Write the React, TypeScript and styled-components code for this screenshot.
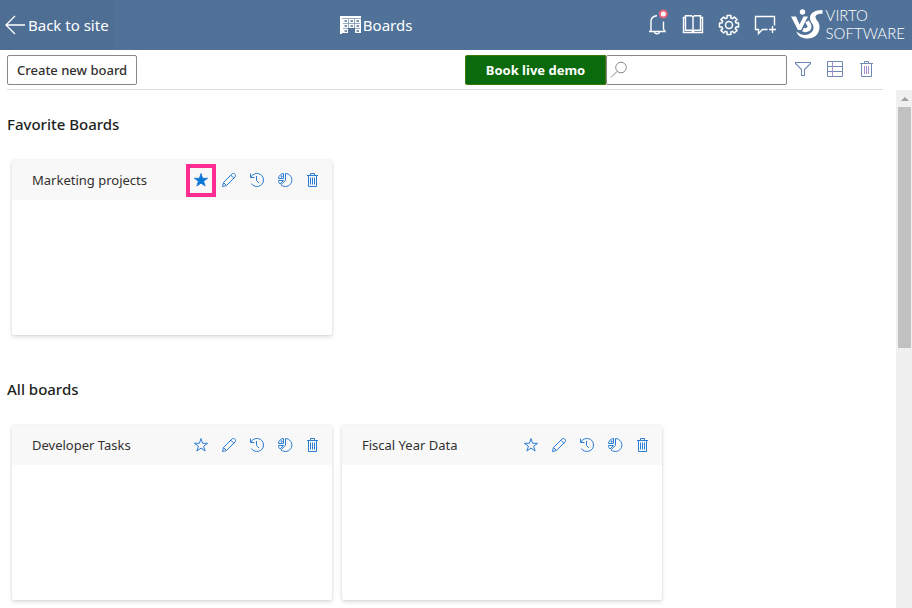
import React from 'react';
import styled, { createGlobalStyle } from 'styled-components';

const GlobalStyle = createGlobalStyle`
  * { box-sizing: border-box; }
  body {
    margin: 0;
    background: #fff;
    color: #323130;
    font-family: "Noto Sans", "Open Sans", sans-serif;
    font-size: 13px;
  }
  button, input { font: inherit; color: inherit; }
  button { cursor: pointer; }
  svg { display: block; flex: none; }
`;

const Page = styled.div`
  display: flex;
  flex-direction: column;
  height: 100vh;
`;

const Header = styled.header`
  display: flex;
  justify-content: space-between;
  flex: none;
  height: 50px;
  background: #517298;
  color: #fff;
`;

const BackLink = styled.a`
  display: flex;
  align-items: center;
  gap: 3px;
  padding: 0 5px;
  background: #4e6e94;
  color: #fff;
  font-size: 15px;
  text-decoration: none;
`;

const Title = styled.h1`
  display: flex;
  align-items: center;
  gap: 2px;
  margin: 0;
  font-size: 15px;
  font-weight: 400;
`;

const HeaderTools = styled.div`
  display: flex;
  align-items: center;
  padding-right: 7px;
`;

const HeaderButton = styled.button`
  display: flex;
  align-items: center;
  justify-content: center;
  width: 36px;
  height: 50px;
  padding: 0;
  border: 0;
  background: none;
  color: #fff;
`;

const Logo = styled.a`
  display: flex;
  align-items: center;
  gap: 3px;
  margin-left: 8px;
  padding-bottom: 2px;
  color: #fff;
  font-family: Lato, sans-serif;
  font-size: 15px;
  font-weight: 300;
  line-height: 18px;
  text-decoration: none;
`;

const LogoLine = styled.span`
  display: block;
`;

const Toolbar = styled.div`
  display: flex;
  align-items: center;
  flex: none;
  height: 40px;
  margin: 0 29px 0 7px;
  border-bottom: 1px solid #dcdcdc;
`;

const CreateButton = styled.button`
  height: 30px;
  padding: 0 9px;
  border: 1px solid #8a8886;
  border-radius: 2px;
  background: #fff;
  font-weight: 500;
`;

const DemoButton = styled.button`
  width: 141px;
  height: 30px;
  margin-left: auto;
  padding: 0;
  border: 1px solid #3a7a0a;
  border-radius: 2px 0 0 2px;
  background: #0b6a0b;
  color: #fff;
  font-weight: 700;
`;

const SearchBox = styled.label`
  display: flex;
  align-items: center;
  width: 181px;
  height: 30px;
  padding: 0 3px;
  border: 1px solid #8a8886;
  border-radius: 2px;
  color: #8a8886;
`;

const SearchInput = styled.input`
  flex: 1;
  min-width: 0;
  height: 26px;
  padding: 0 4px;
  border: 0;
  outline: 0;
  background: none;
`;

const ToolButton = styled.button`
  display: flex;
  align-items: center;
  justify-content: center;
  width: 32px;
  height: 30px;
  padding: 0 0 2px;
  border: 0;
  background: none;
  color: #7089b5;
`;

const Scroller = styled.div`
  display: flex;
  flex: 1;
  min-height: 0;
`;

const Main = styled.main`
  display: flex;
  flex-direction: column;
  gap: 42px;
  flex: 1;
  min-width: 0;
  padding: 22px 7px 0;
  overflow: hidden;
`;

const Section = styled.section`
  flex: none;
`;

const SectionTitle = styled.h2`
  margin: 0 0 24px;
  color: #201f1e;
  font-size: 15px;
  font-weight: 500;
  line-height: 24px;
`;

const Cards = styled.div`
  display: flex;
  flex-wrap: wrap;
  gap: 10px;
  padding-left: 5px;
`;

const Card = styled.article`
  width: 320px;
  height: 175px;
  border-radius: 2px;
  background: #fff;
  box-shadow: 0 2px 4px rgba(0, 0, 0, 0.14), 0 0 2px rgba(0, 0, 0, 0.1);
`;

const CardHeader = styled.header`
  display: flex;
  align-items: center;
  height: 40px;
  padding: 0 5px 0 20px;
  border-radius: 2px 2px 0 0;
  background: #f8f8f8;
`;

const CardTitle = styled.h3`
  flex: 1;
  margin: 0;
  font-size: 13px;
  font-weight: 400;
`;

const CardButton = styled.button<{ $marked?: boolean }>`
  position: relative;
  display: flex;
  align-items: center;
  justify-content: center;
  width: 28px;
  height: 32px;
  padding: 0;
  border: 0;
  background: none;
  color: #2b7cd3;

  &::after {
    content: "";
    display: ${(p) => (p.$marked ? 'block' : 'none')};
    position: absolute;
    inset: 0 -1px -1px;
    border: 4px solid #ff2d92;
  }
`;

const ScrollTrack = styled.div`
  display: flex;
  flex-direction: column;
  align-items: center;
  width: 16px;
  padding-left: 1px;
  background: #f0f0f0;
`;

const ScrollArrow = styled.div`
  display: flex;
  align-items: center;
  justify-content: center;
  height: 17px;
`;

const ScrollThumb = styled.div`
  width: 13px;
  height: 241px;
  background: #c1c1c1;
`;

const stroke = { fill: 'none', stroke: 'currentColor', strokeWidth: 1 };

const gearPath = (() => {
  const points: string[] = [];
  for (let i = 0; i < 8; i++) {
    const base = (i * Math.PI) / 4;
    const corners: [number, number][] = [[-0.27, 7.3], [-0.2, 9.7], [0.2, 9.7], [0.27, 7.3]];
    corners.forEach(([offset, r]) => {
      points.push(`${(12 + r * Math.sin(base + offset)).toFixed(2)} ${(12 - r * Math.cos(base + offset)).toFixed(2)}`);
    });
  }
  return `M${points.join('L')}Z`;
})();

const BackArrow = () => (
  <svg width="20" height="20" viewBox="0 0 20 20" {...stroke} strokeWidth={1.3}>
    <path d="M20 10H1M10 1L1 10L10 19" />
  </svg>
);

const BoardsIcon = () => (
  <svg width="21" height="19" viewBox="0 0 21 19">
    <path d="M0 0H21V17H15V12H14V12H8V17H2V18H0Z" fill="#fff" />
    <path d="M2 2.5H21M8.5 3V17M14.5 3V17M3 7.5H20M3 12.5H20" stroke="#517298" strokeWidth="0.6" />
    <path d="M4.5 5H7M10.5 5H13M16.5 5H19M4.5 10H7M10.5 10H13M16.5 10H19M4.5 15H7M16.5 15H19" stroke="#517298" strokeWidth="1.4" />
  </svg>
);

const BellIcon = () => (
  <svg width="24" height="32" viewBox="0 0 24 32" {...stroke} strokeWidth={1.4}>
    <path d="M4 22.5H20L18.5 20V12.5M6 22V12.5C6 8.8 8.5 7 12 6.7M9.5 23C9.8 25.4 14.2 25.4 14.5 23" />
    <circle cx="18.3" cy="5" r="3.5" fill="#fff" stroke="#e8637b" strokeWidth={2} />
  </svg>
);

const BookIcon = () => (
  <svg width="24" height="24" viewBox="0 0 24 24" {...stroke} strokeWidth={1.4}>
    <path d="M4.5 4.5H2.5V19.5H21.5V4.5H19.5M12 4V19M4.5 17.2V2.8H10.5L12 4L13.5 2.8H19.5V17.2H13.5L12 18.5L10.5 17.2Z" />
  </svg>
);

const GearIcon = () => (
  <svg width="24" height="24" viewBox="0 0 24 24" {...stroke} strokeWidth={1.5} strokeLinejoin="round">
    <path d={gearPath} />
    <circle cx="12" cy="12" r="3.5" />
  </svg>
);

const ChatIcon = () => (
  <svg width="24" height="24" viewBox="0 0 24 24" {...stroke} strokeWidth={1.4}>
    <path d="M21.5 12.5V3.5H2.5V16.5H5.5V20.5L9.5 16.5H14.5M16 16.5H23M19.5 13V20" />
  </svg>
);

const LogoMark = () => (
  <svg width="32" height="30" viewBox="0 0 32 30" fill="none" stroke="#fff">
    <path d="M0 7.5H5L8.5 15.5L12.5 7.5H17L10 21H7Z" fill="#fff" stroke="none" />
    <circle cx="11.5" cy="3" r="2.7" fill="#fff" stroke="none" />
    <path d="M31.5 1V4.8C26 4.8 24.5 6.3 24.5 8C24.5 11 28.5 12 28.5 18C28.5 25 23.5 29.5 16.5 29.5C11 29.5 6.5 27 5.5 22.5C10 26.5 15 26.5 18 25C21.5 23.3 23 20.5 22.5 17.5C22 14.5 19 13 19 9C19 4 23.5 1 31.5 1Z" fill="#fff" stroke="none" />
    <path d="M12 20.5C15 22 18.5 20.5 18.5 17.5C18.5 15.5 17 14 16 12.5" strokeWidth="4" />
  </svg>
);

const SearchIcon = () => (
  <svg width="18" height="18" viewBox="0 0 18 18" {...stroke}>
    <circle cx="11" cy="6.5" r="5.3" />
    <path d="M7.2 10.3L1 16.5" />
  </svg>
);

const FilterIcon = () => (
  <svg width="18" height="18" viewBox="0 0 18 18" {...stroke} strokeWidth={1.1}>
    <path d="M1.5 2.5H16.5V3.5L10.5 9.5V15.5H7.5V9.5L1.5 3.5Z" />
  </svg>
);

const TableIcon = () => (
  <svg width="18" height="18" viewBox="0 0 18 18" {...stroke}>
    <path d="M1.5 1.5H16.5V16.5H1.5ZM1.5 6.5H16.5M1.5 11.5H16.5" />
    <path d="M6.5 1.5V16.5" stroke="#a58fce" />
  </svg>
);

const BigTrashIcon = () => (
  <svg width="14" height="18" viewBox="0 0 14 18" {...stroke}>
    <path d="M0 3.5H13M1.5 3.5V16.5H11.5V3.5M4.5 3.5V1.5H8.5V3.5" />
    <path d="M4.5 6V14M6.5 6V14M8.5 6V14" stroke="#a58fce" />
  </svg>
);

const StarIcon = ({ filled }: { filled?: boolean }) => (
  <svg width="16" height="16" viewBox="0 0 16 16" {...stroke} fill={filled ? '#0078d7' : 'none'}>
    <path d="M8 1.6L9.6 6.3H14.6L10.6 9.2L12.1 14L8 11.1L3.9 14L5.4 9.2L1.4 6.3H6.4Z" />
  </svg>
);

const PencilIcon = () => (
  <svg width="16" height="16" viewBox="0 0 16 16" {...stroke}>
    <path d="M1.5 14.5L2.5 10.5L11 2C12.8 .3 15.7 3 14 5L5.5 13.5L1.5 14.5ZM9.8 3.2L12.8 6.2M2.5 10.5L5.5 13.5" />
  </svg>
);

const HistoryIcon = () => (
  <svg width="16" height="16" viewBox="0 0 16 16" {...stroke}>
    <path d="M2 5C5 -.8 14.5 .8 14.5 8C14.5 15 5.5 16.5 2.3 11.5M1.5 1.5V5.5H5.5M7.5 4V8.5L10 11" />
  </svg>
);

const PieIcon = () => (
  <svg width="16" height="16" viewBox="0 0 16 16" {...stroke}>
    <path d="M8.5 1.5A6.5 6.5 0 1 1 4 12.8L8.5 8.3ZM6.5 1.5V6.5H1.5C1.5 4 4 1.5 6.5 1.5ZM1.5 8.5H6.5L3 12C2 11 1.5 10 1.5 8.5Z" />
    <path d="M3.5 4.5H6.5M4.5 3V6.5" strokeWidth={0.6} />
  </svg>
);

const TrashIcon = () => (
  <svg width="16" height="16" viewBox="0 0 16 16" {...stroke}>
    <path d="M2 3.5H13M3.5 3.5V14.5H11.5V3.5M5.5 3.5V1.5H9.5V3.5" />
    <path d="M5.5 5.5V12.5M7.5 5.5V12.5M9.5 5.5V12.5" />
  </svg>
);

function BoardCard({ name, favorite }: { name: string; favorite?: boolean }) {
  return (
    <Card>
      <CardHeader>
        <CardTitle>{name}</CardTitle>
        <CardButton aria-label="Favorite" aria-pressed={!!favorite} $marked={favorite}>
          <StarIcon filled={favorite} />
        </CardButton>
        <CardButton aria-label="Edit"><PencilIcon /></CardButton>
        <CardButton aria-label="History"><HistoryIcon /></CardButton>
        <CardButton aria-label="Charts"><PieIcon /></CardButton>
        <CardButton aria-label="Delete"><TrashIcon /></CardButton>
      </CardHeader>
    </Card>
  );
}

export default function App() {
  return (
    <Page>
      <GlobalStyle />
      <Header>
        <BackLink href="#"><BackArrow />Back to site</BackLink>
        <Title><BoardsIcon />Boards</Title>
        <HeaderTools>
          <HeaderButton aria-label="Notifications"><BellIcon /></HeaderButton>
          <HeaderButton aria-label="Documentation"><BookIcon /></HeaderButton>
          <HeaderButton aria-label="Settings"><GearIcon /></HeaderButton>
          <HeaderButton aria-label="Feedback"><ChatIcon /></HeaderButton>
          <Logo href="#">
            <LogoMark />
            <span>
              <LogoLine>VIRTO</LogoLine>
              <LogoLine>SOFTWARE</LogoLine>
            </span>
          </Logo>
        </HeaderTools>
      </Header>
      <Toolbar>
        <CreateButton>Create new board</CreateButton>
        <DemoButton>Book live demo</DemoButton>
        <SearchBox>
          <SearchIcon />
          <SearchInput type="text" aria-label="Search boards" />
        </SearchBox>
        <ToolButton aria-label="Filter"><FilterIcon /></ToolButton>
        <ToolButton aria-label="List view"><TableIcon /></ToolButton>
        <ToolButton aria-label="Deleted boards"><BigTrashIcon /></ToolButton>
      </Toolbar>
      <Scroller>
        <Main>
          <Section>
            <SectionTitle>Favorite Boards</SectionTitle>
            <Cards>
              <BoardCard name="Marketing projects" favorite />
            </Cards>
          </Section>
          <Section>
            <SectionTitle>All boards</SectionTitle>
            <Cards>
              <BoardCard name="Developer Tasks" />
              <BoardCard name="Fiscal Year Data" />
            </Cards>
          </Section>
        </Main>
        <ScrollTrack aria-hidden="true">
          <ScrollArrow>
            <svg width="8" height="4" viewBox="0 0 8 4"><path d="M0 4L4 0L8 4Z" fill="#a0a0a0" /></svg>
          </ScrollArrow>
          <ScrollThumb />
        </ScrollTrack>
      </Scroller>
    </Page>
  );
}
